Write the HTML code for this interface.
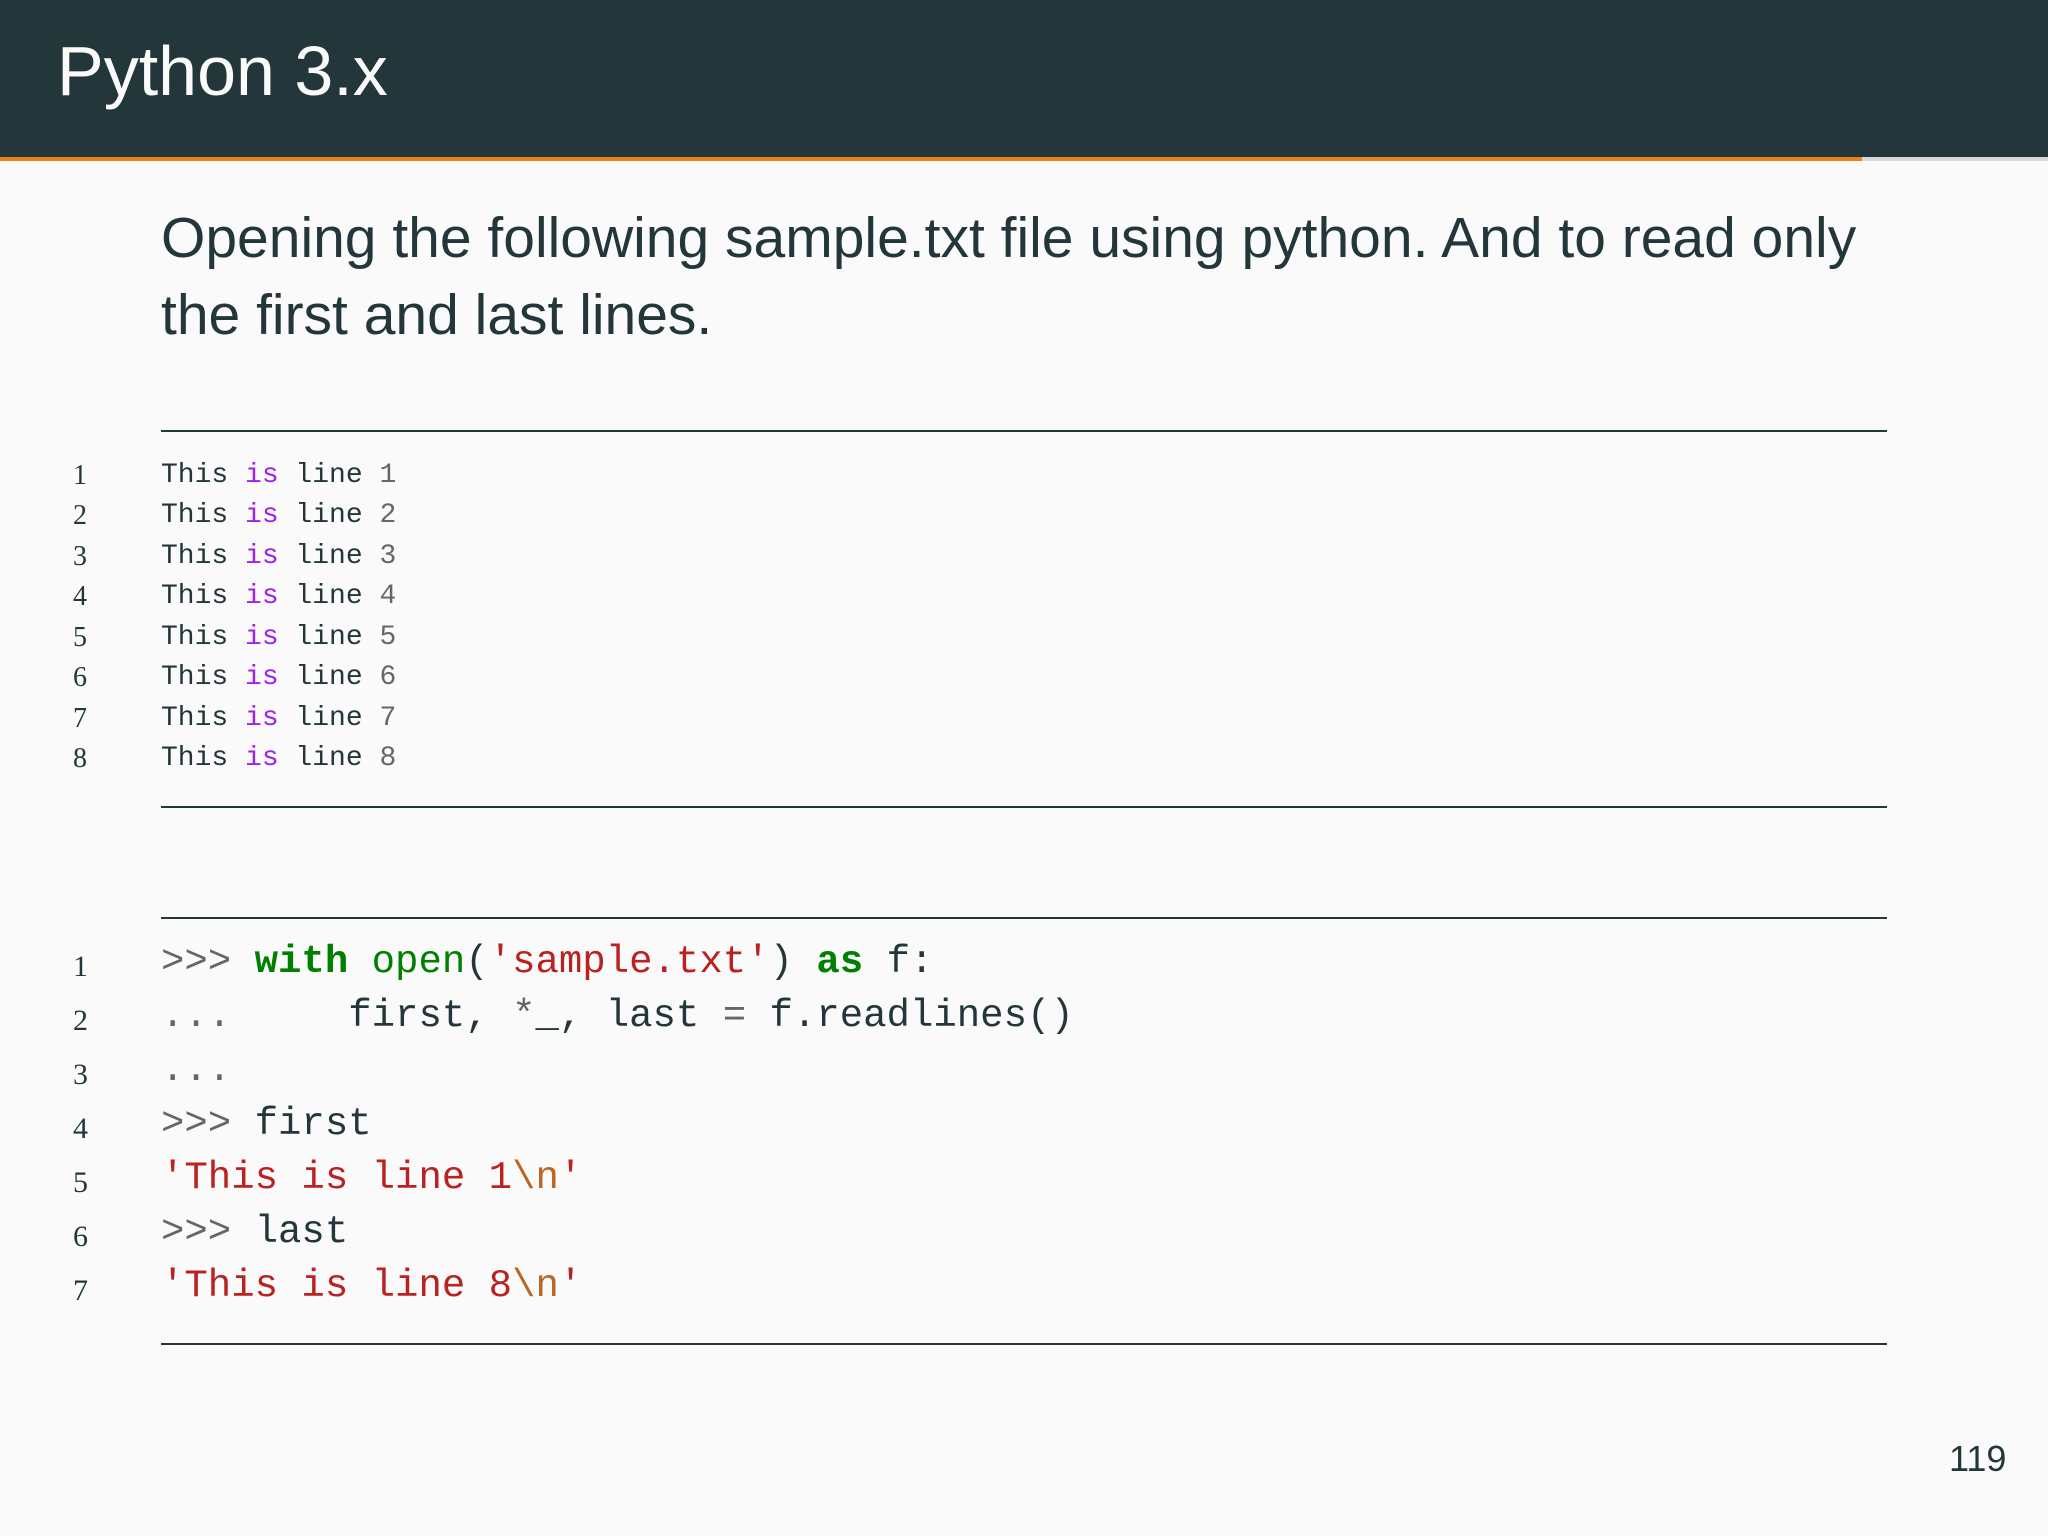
<!DOCTYPE html>
<html><head><meta charset="utf-8"><style>
html,body{margin:0;padding:0}
body{width:2048px;height:1536px;background:#fafafa;position:relative;overflow:hidden;font-family:"Liberation Sans",sans-serif;color:#23373b}
.hdr{position:absolute;left:0;top:0;width:2048px;height:157px;background:#23373b}
.hdr span{position:absolute;left:57px;top:36px;font-size:70px;color:#fafafa;line-height:1}
.bar{position:absolute;left:0;top:157px;width:1862px;height:4px;background:#eb811b}
.bar2{position:absolute;left:1862px;top:157px;width:186px;height:4px;background:#d8d8d8}
.p{position:absolute;left:161px;top:200px;font-size:57px;line-height:77px;width:1750px}
.rule{position:absolute;left:161px;width:1726px;height:2px;background:#23373b}
.ln{position:absolute;font-family:"Liberation Serif",serif;color:#23373b}
.c{position:absolute;left:161px;font-family:"Liberation Mono",monospace;white-space:pre}
.s .c{font-size:28px}.s .ln{font-size:28px;left:73px}
.b .c{font-size:39px}.b .ln{font-size:30px;left:73px}
.k{color:#a020f0}.n{color:#666}.g{color:#008000}.r{color:#ba2121}.o{color:#bb6622}.gr{color:#666}
.pg{position:absolute;left:1949px;top:1438px;font-size:36px;color:#23373b}
</style></head><body>
<div class="hdr"><span>Python 3.x</span></div>
<div class="bar"></div><div class="bar2"></div>
<div class="p">Opening the following sample.txt file using python. And to read only the first and last lines.</div>
<div class="rule" style="top:430px"></div>
<div class="rule" style="top:806px"></div>
<div class="rule" style="top:917px"></div>
<div class="rule" style="top:1343px"></div>
<div class="s">
<div class="ln" style="top:460px">1</div><div class="c" style="top:460px">This <span class="k">is</span> line <span class="n">1</span></div>
<div class="ln" style="top:500px">2</div><div class="c" style="top:500px">This <span class="k">is</span> line <span class="n">2</span></div>
<div class="ln" style="top:541px">3</div><div class="c" style="top:541px">This <span class="k">is</span> line <span class="n">3</span></div>
<div class="ln" style="top:581px">4</div><div class="c" style="top:581px">This <span class="k">is</span> line <span class="n">4</span></div>
<div class="ln" style="top:622px">5</div><div class="c" style="top:622px">This <span class="k">is</span> line <span class="n">5</span></div>
<div class="ln" style="top:662px">6</div><div class="c" style="top:662px">This <span class="k">is</span> line <span class="n">6</span></div>
<div class="ln" style="top:703px">7</div><div class="c" style="top:703px">This <span class="k">is</span> line <span class="n">7</span></div>
<div class="ln" style="top:743px">8</div><div class="c" style="top:743px">This <span class="k">is</span> line <span class="n">8</span></div>
</div>
<div class="b">
<div class="ln" style="top:950px">1</div><div class="c" style="top:940px"><span class="gr">&gt;&gt;&gt;</span> <b class="g">with</b> <span class="g">open</span>(<span class="r">'sample.txt'</span>) <b class="g">as</b> f:</div>
<div class="ln" style="top:1004px">2</div><div class="c" style="top:994px"><span class="gr">...</span>     first, <span class="gr">*</span>_, last <span class="gr">=</span> f.readlines()</div>
<div class="ln" style="top:1058px">3</div><div class="c" style="top:1048px"><span class="gr">...</span></div>
<div class="ln" style="top:1112px">4</div><div class="c" style="top:1102px"><span class="gr">&gt;&gt;&gt;</span> first</div>
<div class="ln" style="top:1166px">5</div><div class="c" style="top:1156px"><span class="r">'This is line 1</span><span class="o">\n</span><span class="r">'</span></div>
<div class="ln" style="top:1220px">6</div><div class="c" style="top:1210px"><span class="gr">&gt;&gt;&gt;</span> last</div>
<div class="ln" style="top:1274px">7</div><div class="c" style="top:1264px"><span class="r">'This is line 8</span><span class="o">\n</span><span class="r">'</span></div>
</div>
<div class="pg">119</div>
</body></html>
